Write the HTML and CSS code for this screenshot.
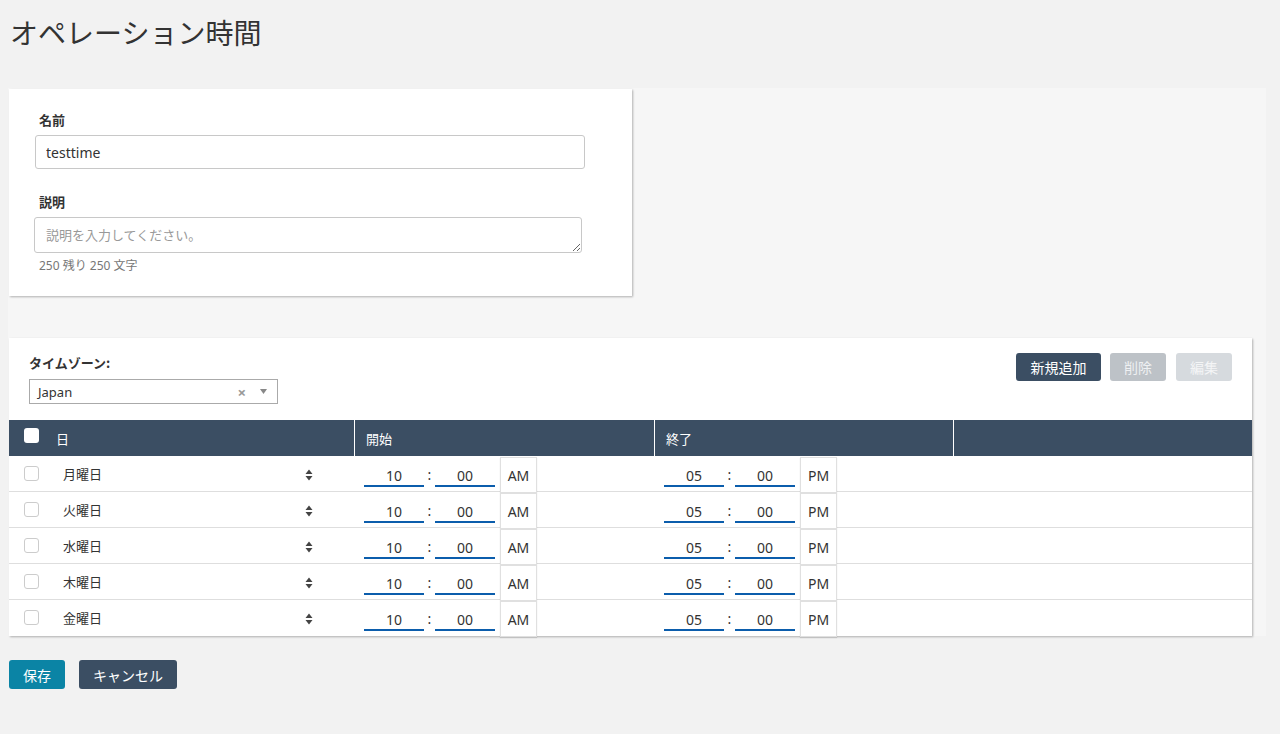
FILE: index.html
```html
<!DOCTYPE html>
<html lang="ja">
<head>
<meta charset="utf-8">
<title>オペレーション時間</title>
<link rel="stylesheet" href="styles.css">
</head>
<body>
<div class="page">
  <h1 class="title">オペレーション時間</h1>
  <div class="area">
    <div class="card card-info">
      <label class="label">名前</label>
      <input class="text-input" type="text" value="testtime">
      <label class="label label-desc">説明</label>
      <textarea class="textarea" placeholder="説明を入力してください。"></textarea>
      <div class="counter">250 残り 250 文字</div>
    </div>

    <div class="card card-table">
      <div class="toolbar">
        <div class="tz">
          <div class="label tz-label">タイムゾーン:</div>
          <div class="select">
            <span class="select-value">Japan</span>
            <span class="select-clear">×</span>
            <svg class="select-arrow" width="7" height="5" viewBox="0 0 7 5"><path d="M0 0H7L3.5 5Z" fill="#888"/></svg>
          </div>
        </div>
        <div class="actions">
          <button class="btn btn-dark btn-new">新規追加</button>
          <button class="btn btn-disabled">削除</button>
          <button class="btn btn-disabled2">編集</button>
        </div>
      </div>

      <div class="grid head">
        <div class="hcell hcell-day"><span class="cb cb-head"></span><span>日</span></div>
        <div class="hcell">開始</div>
        <div class="hcell">終了</div>
        <div class="hcell hcell-last"></div>
      </div>

      <div class="grid row">
        <div class="cell cell-day"><span class="cb"></span><span class="day">月曜日</span>
          <svg class="sort" width="8" height="12" viewBox="0 0 8 12"><path d="M4 0.5L7.5 5H0.5Z M0.5 7H7.5L4 11.5Z" fill="#444"/></svg></div>
        <div class="cell cell-time"><span class="tin">10</span><span class="colon">:</span><span class="tin">00</span><span class="ampm">AM</span></div>
        <div class="cell cell-time"><span class="tin">05</span><span class="colon">:</span><span class="tin">00</span><span class="ampm">PM</span></div>
        <div class="cell"></div>
      </div>
      <div class="grid row">
        <div class="cell cell-day"><span class="cb"></span><span class="day">火曜日</span>
          <svg class="sort" width="8" height="12" viewBox="0 0 8 12"><path d="M4 0.5L7.5 5H0.5Z M0.5 7H7.5L4 11.5Z" fill="#444"/></svg></div>
        <div class="cell cell-time"><span class="tin">10</span><span class="colon">:</span><span class="tin">00</span><span class="ampm">AM</span></div>
        <div class="cell cell-time"><span class="tin">05</span><span class="colon">:</span><span class="tin">00</span><span class="ampm">PM</span></div>
        <div class="cell"></div>
      </div>
      <div class="grid row">
        <div class="cell cell-day"><span class="cb"></span><span class="day">水曜日</span>
          <svg class="sort" width="8" height="12" viewBox="0 0 8 12"><path d="M4 0.5L7.5 5H0.5Z M0.5 7H7.5L4 11.5Z" fill="#444"/></svg></div>
        <div class="cell cell-time"><span class="tin">10</span><span class="colon">:</span><span class="tin">00</span><span class="ampm">AM</span></div>
        <div class="cell cell-time"><span class="tin">05</span><span class="colon">:</span><span class="tin">00</span><span class="ampm">PM</span></div>
        <div class="cell"></div>
      </div>
      <div class="grid row">
        <div class="cell cell-day"><span class="cb"></span><span class="day">木曜日</span>
          <svg class="sort" width="8" height="12" viewBox="0 0 8 12"><path d="M4 0.5L7.5 5H0.5Z M0.5 7H7.5L4 11.5Z" fill="#444"/></svg></div>
        <div class="cell cell-time"><span class="tin">10</span><span class="colon">:</span><span class="tin">00</span><span class="ampm">AM</span></div>
        <div class="cell cell-time"><span class="tin">05</span><span class="colon">:</span><span class="tin">00</span><span class="ampm">PM</span></div>
        <div class="cell"></div>
      </div>
      <div class="grid row row-last">
        <div class="cell cell-day"><span class="cb"></span><span class="day">金曜日</span>
          <svg class="sort" width="8" height="12" viewBox="0 0 8 12"><path d="M4 0.5L7.5 5H0.5Z M0.5 7H7.5L4 11.5Z" fill="#444"/></svg></div>
        <div class="cell cell-time"><span class="tin">10</span><span class="colon">:</span><span class="tin">00</span><span class="ampm">AM</span></div>
        <div class="cell cell-time"><span class="tin">05</span><span class="colon">:</span><span class="tin">00</span><span class="ampm">PM</span></div>
        <div class="cell"></div>
      </div>
    </div>
  </div>

  <div class="footer">
    <button class="btn btn-save">保存</button>
    <button class="btn btn-dark btn-cancel">キャンセル</button>
  </div>
</div>
</body>
</html>
```

FILE: styles.css
```css
* { box-sizing: border-box; }
html, body { margin: 0; padding: 0; }
body {
  background: #f2f2f2;
  font-family: "Noto Sans", "Noto Sans CJK JP", sans-serif;
  color: #333;
  font-size: 13px;
}
.page { padding-top: 15px; }
.title {
  margin: 0 0 0 10px;
  font-size: 28px;
  line-height: 34px;
  font-weight: 400;
  color: #333;
  font-family: "Noto Sans CJK JP", sans-serif;
}
.area {
  margin: 39px 0 0 8px;
  width: 1258px;
  background: #f6f6f6;
  padding: 1px 0 0 1px;
}
.card {
  background: #fff;
  box-shadow: 1px 1px 2px rgba(0,0,0,0.28);
}
.card-info {
  width: 623px;
  height: 207px;
  padding: 23px 0 0 26px;
  display: flex;
  flex-direction: column;
  align-items: flex-start;
}
.label {
  display: block;
  font-family: "Noto Sans CJK JP", sans-serif;
  font-size: 13px;
  line-height: 16px;
  font-weight: 700;
  color: #333;
  margin-left: 4px;
}
.text-input {
  margin-top: 7px;
  width: 550px;
  height: 34px;
  border: 1px solid #c8c8c8;
  border-radius: 3px;
  padding: 0 10px;
  font-family: "Noto Sans", "Noto Sans CJK JP", sans-serif;
  font-size: 14px;
  color: #333;
  outline: none;
}
.label-desc { margin-top: 25px; }
.textarea {
  margin: 7px 0 0 -1px;
  width: 548px;
  height: 36px;
  border: 1px solid #c8c8c8;
  border-radius: 3px;
  padding: 8px 11px 0;
  font-family: "Noto Sans CJK JP", sans-serif;
  font-size: 13px;
  line-height: 18px;
  color: #333;
  resize: vertical;
  outline: none;
}
.textarea::placeholder { color: #999; }
.counter {
  margin: 5px 0 0 4px;
  font-size: 12px;
  line-height: 16px;
  color: #777;
  font-family: "Noto Sans", "Noto Sans CJK JP", sans-serif;
}
.card-table {
  margin-top: 42px;
  width: 1243px;
  height: 298px;
}
.toolbar {
  display: flex;
  justify-content: space-between;
  align-items: flex-start;
  padding: 17px 20px 0 20px;
  height: 82px;
}
.tz-label { margin-left: 0; }
.select {
  margin-top: 8px;
  width: 249px;
  height: 25px;
  border: 1px solid #aaa;
  display: flex;
  align-items: center;
  padding: 0 8px;
}
.select-value { flex: 1; font-size: 13px; color: #333; margin-top: 1px; }
.select-clear { color: #999; font-size: 15px; font-weight: 700; margin-right: 14px; line-height: 1; margin-top: 2px; }
.select-arrow { margin-right: 2px; }
.actions { display: flex; gap: 9px; margin-top: -2px; }
.btn {
  height: 28px;
  border: none;
  border-radius: 3px;
  font-family: "Noto Sans CJK JP", sans-serif;
  font-size: 14px;
  color: #fff;
  padding: 0 13px;
  cursor: pointer;
}
.btn-dark { background: #3b4e63; }
.btn-new { width: 85px; padding: 0; }
.btn-disabled { background: #bdc2c7; color: #eef0f2; width: 56px; padding: 0; }
.btn-disabled2 { background: #d6dade; color: #f4f5f6; width: 56px; padding: 0; margin-left: 1px; }
.grid {
  display: grid;
  grid-template-columns: 346px 300px 299px 1fr;
}
.head {
  background: #3b4e63;
  height: 36px;
  color: #fff;
}
.hcell {
  border-right: 1px solid #fff;
  display: flex;
  align-items: center;
  padding-left: 11px;
  font-family: "Noto Sans CJK JP", sans-serif;
  font-size: 13px;
}
.hcell-last { border-right: none; }
.hcell-day { padding-left: 15px; }
.cb {
  width: 15px;
  height: 15px;
  border-radius: 3px;
  border: 1px solid #ccc;
  background: #fff;
  display: inline-block;
  flex: none;
}
.cb-head { border: none; margin-right: 17px; margin-top: -6px; }
.row {
  height: 36px;
  border-bottom: 1px solid #dedede;
}
.row-last { border-bottom: none; }
.cell { display: flex; align-items: flex-start; }
.cell-day { padding-left: 15px; align-items: center; }
.cell-day .cb { margin-top: -3px; }
.day {
  flex: 1;
  margin-left: 24px;
  margin-top: -3px;
  font-family: "Noto Sans CJK JP", sans-serif;
  font-size: 13px;
  color: #333;
}
.sort { margin-right: 42px; }
.cell-time { padding-left: 9px; }
.tin {
  margin-top: 8px;
  width: 60px;
  height: 23px;
  padding-top: 2px;
  border-bottom: 2px solid #0b5dac;
  text-align: center;
  font-size: 14px;
  line-height: 20px;
  color: #333;
}
.colon {
  width: 11px;
  text-align: center;
  margin-top: 9px;
  font-size: 14px;
  line-height: 20px;
  color: #333;
}
.ampm {
  position: relative;
  z-index: 1;
  margin: 1px 0 0 5px;
  width: 37px;
  height: 36px;
  border: 1px solid #e0e0e0;
  box-shadow: 0 1px 1px rgba(0,0,0,0.12);
  background: #fff;
  display: flex;
  align-items: center;
  justify-content: center;
  font-size: 14px;
  color: #333;
}
.footer {
  margin: 24px 0 0 9px;
  display: flex;
  gap: 14px;
}
.btn-save { background: #0b84a5; height: 29px; width: 56px; padding: 0; }
.btn-cancel { height: 29px; width: 98px; padding: 0; }
```
